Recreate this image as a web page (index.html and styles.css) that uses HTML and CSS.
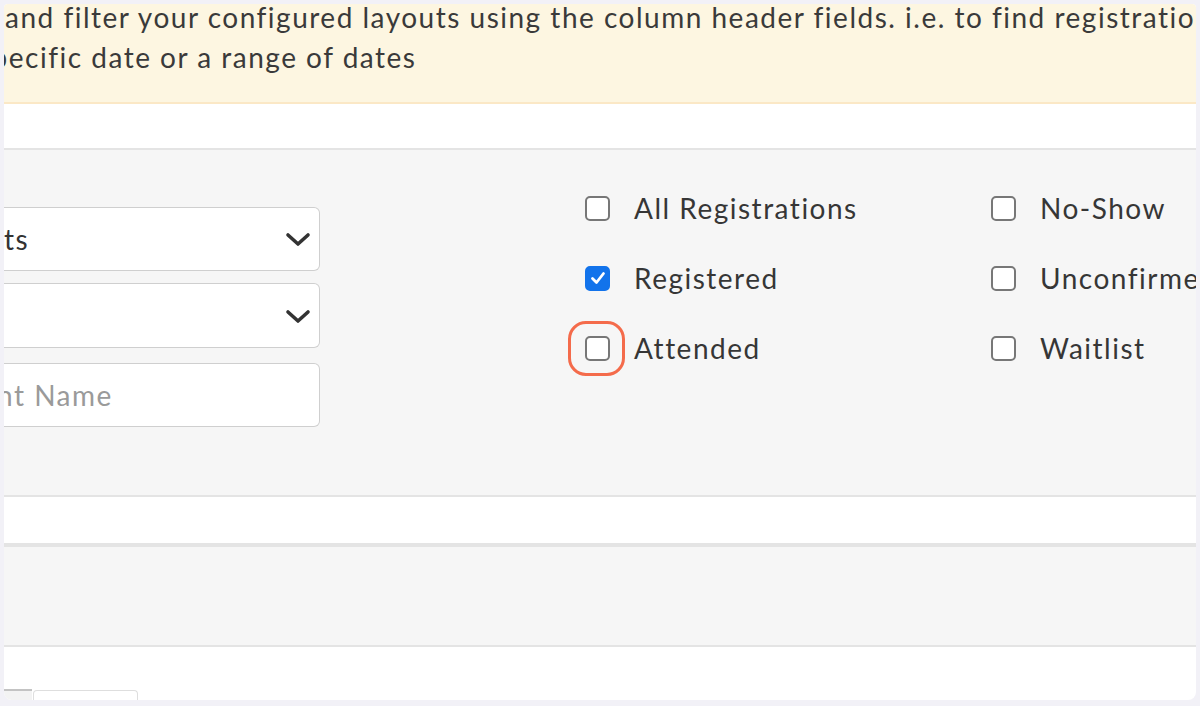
FILE: index.html
```html
<!DOCTYPE html>
<html>
	<head>
		<meta charset="UTF-8">
		<title>Registrations</title>
		<link rel="stylesheet" href="styles.css">
	</head>
	<body>
		<div class="page">
			<div class="notice">
				<span class="line">and filter your configured layouts using the column header fields. i.e. to find registrations</span>
				<span class="line shift">specific date or a range of dates</span>
			</div>
			<div class="band"></div>
			<div class="filters">
				<div class="controls">
					<div class="select">
						<span>ts</span>
						<svg class="chev" width="26" height="16" viewBox="0 0 26 16"><path d="M3 3 L13 12 L23 3" fill="none" stroke="#333" stroke-width="3.6" stroke-linecap="round" stroke-linejoin="round"/></svg>
					</div>
					<div class="select">
						<span></span>
						<svg class="chev" width="26" height="16" viewBox="0 0 26 16"><path d="M3 3 L13 12 L23 3" fill="none" stroke="#333" stroke-width="3.6" stroke-linecap="round" stroke-linejoin="round"/></svg>
					</div>
					<div class="field">
						<span class="placeholder">nt Name</span>
					</div>
				</div>
				<div class="checks">
					<label class="check"><span class="box"></span>All Registrations</label>
					<label class="check"><span class="box"></span>No-Show</label>
					<label class="check"><span class="box checked"><svg width="20" height="20" viewBox="0 0 20 20"><path d="M4.5 10.5 L8.5 14.5 L15.5 5.5" fill="none" stroke="#fff" stroke-width="2.8" stroke-linecap="round" stroke-linejoin="round"/></svg></span>Registered</label>
					<label class="check"><span class="box"></span>Unconfirmed</label>
					<label class="check"><span class="box highlight"></span>Attended</label>
					<label class="check"><span class="box"></span>Waitlist</label>
				</div>
			</div>
			<div class="band thin"></div>
			<div class="panel"></div>
			<div class="bottom">
				<div class="tabs">
					<div class="tab active"></div>
					<div class="tab"></div>
				</div>
			</div>
		</div>
	</body>
</html>
```

FILE: styles.css
```css
html,body{
	margin: 0;
	padding: 0;
	background: #f2f1f7;
	height: 100%;
	overflow: hidden;
}
body{
	padding: 4px 4px 6px 4px;
	box-sizing: border-box;
	font-family: Lato, "Open Sans", sans-serif;
	color: #3a3a3a;
	letter-spacing: 1.5px;
}
.page{
	background: #fff;
	height: 100%;
	border-radius: 4px 4px 8px 8px;
	overflow: hidden;
	display: flex;
	flex-direction: column;
}
.notice{
	background: #fdf6e1;
	border-bottom: 2px solid #fbe8c6;
	height: 105px;
	flex: none;
	font-size: 28px;
	line-height: 40px;
	margin-top: -7px;
}
.notice .line{
	display: block;
	white-space: nowrap;
	margin-left: 1px;
}
.notice .shift{
	margin-left: -26px;
}
.band{
	height: 44px;
	flex: none;
	background: #fff;
	border-bottom: 2px solid #e4e4e4;
}
.band.thin{
	height: 46px;
	border-top: 2px solid #e4e4e4;
}
.filters{
	background: #f6f6f6;
	height: 345px;
	flex: none;
	display: flex;
	padding-top: 46px;
	box-sizing: border-box;
}
.controls{
	width: 316px;
	padding-top: 11px;
	display: flex;
	flex-direction: column;
	gap: 12px;
}
.select,.field{
	height: 64px;
	box-sizing: border-box;
	background: #fff;
	border: 1px solid #cfcfcf;
	border-left: none;
	border-radius: 0 6px 6px 0;
	display: flex;
	align-items: center;
	justify-content: space-between;
	font-size: 28px;
	color: #333;
	padding-right: 8px;
}
.select:nth-child(2){
	height: 65px;
}
.field{
	margin-top: 3px;
}
.placeholder{
	color: #9a9a9a;
	margin-left: -7px;
}
.chev{
	margin-top: 2px;
}
.checks{
	margin-left: 265px;
	display: grid;
	grid-template-columns: 406px 200px;
	grid-auto-rows: 70px;
	align-content: start;
}
.check{
	display: flex;
	align-items: center;
	gap: 24px;
	font-size: 28px;
	color: #363636;
	height: 24px;
	white-space: nowrap;
}
.box{
	position: relative;
	width: 25px;
	height: 25px;
	box-sizing: border-box;
	border: 2px solid #777;
	border-radius: 5px;
	background: #fff;
	flex: none;
	display: flex;
	align-items: center;
	justify-content: center;
}
.box.checked{
	background: #1273eb;
	border-color: #1273eb;
}
.box.highlight::after{
	content: "";
	position: absolute;
	left: -19px;
	top: -17px;
	width: 51px;
	height: 49px;
	border: 3px solid #f46b4b;
	border-radius: 18px;
}
.panel{
	height: 98px;
	flex: none;
	background: #f6f6f6;
	border-top: 2px solid #e4e4e4;
	border-bottom: 2px solid #e4e4e4;
}
.bottom{
	flex: 1;
	display: flex;
	align-items: flex-end;
}
.tabs{
	display: flex;
	gap: 1px;
	align-items: flex-end;
}
.tab{
	width: 103px;
	height: 9px;
	border: 1px solid #dedede;
	border-bottom: none;
	border-radius: 4px 4px 0 0;
	background: #fff;
}
.tab.active{
	width: 28px;
	height: 9px;
	border: none;
	border-top: 2px solid #c3c3c3;
	border-radius: 0;
	background: #f3f3f3;
}
```
